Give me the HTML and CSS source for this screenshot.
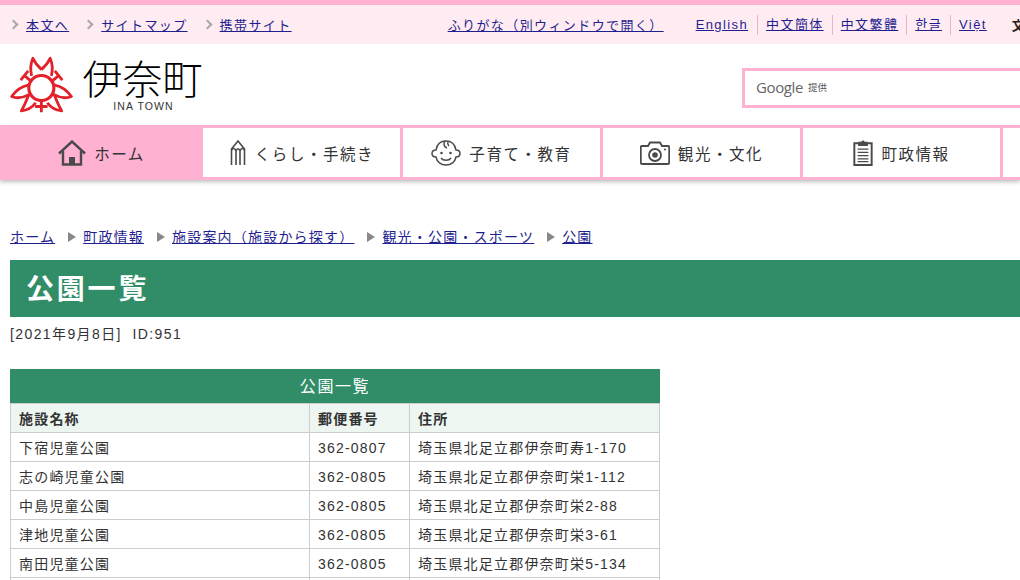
FILE: index.html
```html
<!DOCTYPE html>
<html lang="ja">
<head>
<meta charset="utf-8">
<title>公園一覧</title>
<link rel="stylesheet" href="styles.css">
</head>
<body>
<div class="topbar">
  <ul class="skip">
    <li><a href="#">本文へ</a></li>
    <li><a href="#">サイトマップ</a></li>
    <li><a href="#">携帯サイト</a></li>
  </ul>
  <a class="furigana" href="#">ふりがな（別ウィンドウで開く）</a>
  <ul class="langs">
    <li><a href="#">English</a></li>
    <li><a href="#">中文簡体</a></li>
    <li><a href="#">中文繁體</a></li>
    <li><a href="#">한글</a></li>
    <li><a href="#">Việt</a></li>
  </ul>
  <span class="fontsize">文字サイズ</span>
</div>
<header class="masthead">
  <svg class="logo" viewBox="0 0 240 210" width="80" height="70" aria-hidden="true">
    <g fill="none" stroke="#e3212b" stroke-width="9" stroke-linejoin="round" stroke-linecap="butt" transform="translate(7.5 6) scale(.94)">
      <circle cx="124" cy="115" r="40" stroke-width="10"/>
      <path d="M93 76C87 52 90 36 97 20C104 36 113 46 125 56"/>
      <path d="M92 94L68 74M58 90L82 60"/>
      <path d="M82 106C60 110 44 122 29 142C48 150 66 146 84 136C76 156 70 172 60 188C80 186 96 176 106 162"/>
      <g transform="matrix(-1 0 0 1 249 0)">
        <path d="M93 76C87 52 90 36 97 20C104 36 113 46 125 56"/>
        <path d="M92 94L68 74M58 90L82 60"/>
        <path d="M82 106C60 110 44 122 29 142C48 150 66 146 84 136C76 156 70 172 60 188C80 186 96 176 106 162"/>
      </g>
      <path d="M124 155V192M104 174H144"/>
    </g>
  </svg>
  <div class="wordmark">
    <span class="town-ja">伊奈町</span>
    <span class="town-en">INA TOWN</span>
  </div>
  <div class="search"><span class="google">Google</span><span class="provided">提供</span></div>
</header>
<nav class="gnav">
  <a class="gnav-item current" href="#">
    <svg viewBox="0 0 28 26" width="28" height="26" fill="none" stroke="#4a4a4a" stroke-width="2.4"><path d="M1 13.5L14 1.5L27 13.5"/><path d="M5 11V24.5H23V11"/><path d="M11 24.5V17H17V24.5" fill="#4a4a4a" stroke="none"/></svg>
    ホーム
  </a>
  <a class="gnav-item" href="#">
    <svg viewBox="0 0 18 26" width="18" height="26" fill="none" stroke="#4a4a4a" stroke-width="1.6"><path d="M2.5 25V9L9 1L15.500 9V25"/><path d="M2.500 10C4 7.500 6 8 7 11V25M7 11C8 8 10 8 11 11V25M11 11C12 8 14 7.500 15.500 10"/></svg>
    くらし・手続き
  </a>
  <a class="gnav-item" href="#">
    <svg viewBox="0 0 30 26" width="30" height="26" fill="none" stroke="#4a4a4a" stroke-width="1.5"><path d="M5 10C6 4 10 1 15 1C21 1 24 5 25 10C28 10 29 12 29 13.5C29 15 28 17 25 17C24 22 20 25 15 25C10 25 6 22 5 17C2 17 1 15 1 13.5C1 12 2 10 5 10Z"/><path d="M14 1C12 4 13 7 16 8M17 2C16 4 17 5 18 6"/><circle cx="10.500" cy="13" r="1.300" fill="#4a4a4a" stroke="none"/><circle cx="19.500" cy="13" r="1.300" fill="#4a4a4a" stroke="none"/><path d="M10 18C12 21 18 21 20 18"/></svg>
    子育て・教育
  </a>
  <a class="gnav-item" href="#">
    <svg viewBox="0 0 30 24" width="30" height="24" fill="none" stroke="#4a4a4a"><path d="M2 5H8L10 1.500H20L22 5H28C29 5 29.200 5.500 29.200 6.500V21.500C29.200 22.500 28.500 23 28 23H2C1 23 .8 22.500 .8 21.500V6.500C.8 5.500 1 5 2 5Z" stroke-width="1.800"/><circle cx="15" cy="14" r="6" stroke-width="1.800"/><circle cx="15" cy="14" r="2.800" fill="#4a4a4a" stroke="none"/><circle cx="25" cy="8.500" r="1" fill="#4a4a4a" stroke="none"/></svg>
    観光・文化
  </a>
  <a class="gnav-item" href="#">
    <svg viewBox="0 0 18 24" width="20" height="26" fill="none" stroke="#4a4a4a" stroke-width="1.800"><path d="M5 3H1V23H17V3H13"/><path d="M5 2H7.500L9 .8L10.500 2H13V5H5Z" fill="#4a4a4a" stroke-width="1"/><path d="M4 8.500H14M4 11.500H14M4 14.500H14M4 17.500H14M4 20H14" stroke-width="1.200"/></svg>
    町政情報
  </a>
  <a class="gnav-item" href="#"></a>
</nav>
<main class="content">
  <ol class="crumbs">
    <li><a href="#">ホーム</a></li>
    <li><a href="#">町政情報</a></li>
    <li><a href="#">施設案内（施設から探す）</a></li>
    <li><a href="#">観光・公園・スポーツ</a></li>
    <li><a href="#">公園</a></li>
  </ol>
  <h1 class="title">公園一覧</h1>
  <p class="meta">[2021年9月8日]&nbsp;&nbsp;ID:951</p>
  <table class="parks">
    <caption>公園一覧</caption>
    <thead>
      <tr><th class="col-name">施設名称</th><th class="col-zip">郵便番号</th><th>住所</th></tr>
    </thead>
    <tbody>
      <tr><td>下宿児童公園</td><td>362-0807</td><td>埼玉県北足立郡伊奈町寿1-170</td></tr>
      <tr><td>志の崎児童公園</td><td>362-0805</td><td>埼玉県北足立郡伊奈町栄1-112</td></tr>
      <tr><td>中島児童公園</td><td>362-0805</td><td>埼玉県北足立郡伊奈町栄2-88</td></tr>
      <tr><td>津地児童公園</td><td>362-0805</td><td>埼玉県北足立郡伊奈町栄3-61</td></tr>
      <tr><td>南田児童公園</td><td>362-0805</td><td>埼玉県北足立郡伊奈町栄5-134</td></tr>
      <tr><td>&nbsp;</td><td>&nbsp;</td><td>&nbsp;</td></tr>
    </tbody>
  </table>
</main>
</body>
</html>
```
FILE: styles.css
```css
* { box-sizing: border-box; }
html, body { margin: 0; padding: 0; height: 580px; overflow: hidden; }
body {
  width: 1020px;
  font-family: "Liberation Sans", "Noto Sans CJK JP", sans-serif;
  font-size: 14px;
  letter-spacing: 1.400px;
  color: #333;
  background: #fff;
}
a { color: #1f1f8f; }
ul, ol { list-style: none; margin: 0; padding: 0; }

.topbar {
  display: flex;
  align-items: center;
  height: 44px;
  padding-bottom: 1px;
  border-top: 5px solid #ffb1d1;
  background: #ffebf2;
  font-size: 13px;
  white-space: nowrap;
  overflow: hidden;
}
.skip { display: flex; flex: none; }
.skip li { position: relative; padding-left: 26px; margin-right: 6px; }
.skip li::before {
  content: "";
  position: absolute;
  left: 10px;
  top: 6px;
  width: 5px;
  height: 5px;
  border-top: 2px solid #a8a8a8;
  border-right: 2px solid #a8a8a8;
  transform: rotate(45deg);
}
.furigana { margin-left: 150px; flex: none; }
.langs { display: flex; margin: 1px 0 0 32px; flex: none; }
.langs li { padding: 0 8px; border-left: 1px solid #e8b4ca; line-height: 20px; }
.langs li:first-child { padding-left: 0; padding-right: 9px; border-left: 0; }
.fontsize { margin-left: 17px; font-weight: bold; color: #222; flex: none; }

.masthead {
  display: flex;
  align-items: flex-start;
  height: 81px;
  overflow: hidden;
  position: relative;
}
.logo { flex: none; margin-top: 6px; }
.wordmark { display: flex; flex-direction: column; align-items: center; margin-left: 4px; flex: none; width: 117px; }
.town-ja { font-family: "Noto Sans CJK JP", sans-serif; font-size: 40px; font-weight: 300; line-height: 40px; margin-top: 13px; letter-spacing: 0; color: #000; white-space: nowrap; }
.town-en { font-size: 10.500px; line-height: 12px; margin-top: 3px; margin-left: 2px; letter-spacing: 1.100px; white-space: nowrap; }
.search {
  flex: none;
  display: flex;
  align-items: center;
  width: 400px;
  height: 40px;
  margin-top: 24px;
  margin-left: 541px;
  padding: 0 0 2px 11px;
  border: 3px solid #ffb1d1;
  background: #fff;
}
.google { font-family: "Open Sans", sans-serif; font-size: 15px; letter-spacing: -0.4px; color: #666; }
.provided { font-size: 9.500px; letter-spacing: .2px; margin-left: 5px; color: #555; }

.gnav {
  display: flex;
  height: 55px;
  padding: 3px 0;
  background: #ffb1d1;
  box-shadow: 0 2px 4px rgba(0, 0, 0, .25);
  position: relative;
  overflow: hidden;
}
.gnav-item {
  flex: none;
  width: 200px;
  display: flex;
  align-items: center;
  justify-content: center;
  gap: 8px;
  border-left: 3px solid #ffb1d1;
  background: #fff;
  color: #333;
  font-size: 15.500px;
  letter-spacing: 1.550px;
  text-decoration: none;
  white-space: nowrap;
}
.gnav-item.current { background: #ffb1d1; }

.content { padding: 0 0 0 10px; }
.crumbs { display: flex; margin-top: 47px; line-height: 20px; white-space: nowrap; letter-spacing: 1.200px; }
.crumbs li { position: relative; }
.crumbs li + li { padding-left: 28px; }
.crumbs li + li::before {
  content: "";
  position: absolute;
  left: 13px;
  top: 5px;
  border-left: 8px solid #888;
  border-top: 5px solid transparent;
  border-bottom: 5px solid transparent;
}
.title {
  margin: 13px 0 0;
  height: 57px;
  padding-left: 16px;
  background: #318c68;
  color: #fff;
  font-size: 28px;
  letter-spacing: 2.800px;
  line-height: 59px;
}
.meta { margin: 8px 0 0; line-height: 19px; }
.parks {
  margin-top: 25px;
  width: 650px;
  table-layout: fixed;
  border-collapse: collapse;
  letter-spacing: 1.200px;
}
.parks caption {
  height: 34px;
  background: #318c68;
  color: #fff;
  font-size: 16px;
  letter-spacing: 1.600px;
  line-height: 36px;
  text-align: center;
}
.parks th, .parks td {
  height: 29px;
  padding: 2px 8px 0;
  border: 1px solid #ccc;
  text-align: left;
  line-height: 26px;
  white-space: nowrap;
}
.parks th { background: #edf6f1; font-weight: bold; }
.col-name { width: 299px; }
.col-zip { width: 100px; }
```
